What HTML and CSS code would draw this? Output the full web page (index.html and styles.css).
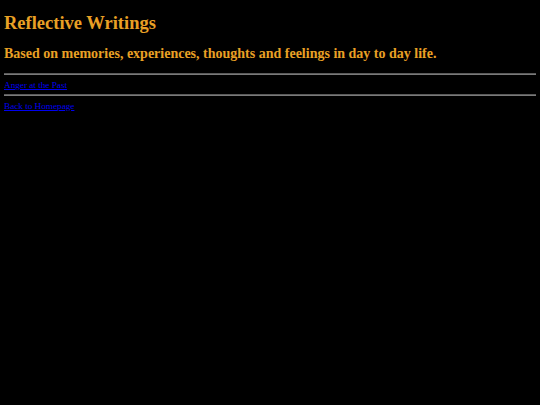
FILE: index.html
```html
<!DOCTYPE html>
<html>
<head>
<meta charset="utf-8">
<title>Reflective Writings</title>
<link rel="stylesheet" href="styles.css">
</head>
<body class="page">
<h1 class="title">Reflective Writings</h1>
<h2 class="subtitle">Based on memories, experiences, thoughts and feelings in day to day life.</h2>
<hr class="rule">
<a class="link" href="#">Anger at the Past</a>
<hr class="rule">
<a class="link" href="#">Back to Homepage</a>
</body>
</html>
```
FILE: styles.css
```css
html { background: #000; }
.page {
  margin: 4px;
  background: #000;
  color: #e9a025;
  font-family: "Liberation Serif", "Times New Roman", serif;
  font-size: 9px;
}
.title {
  font-size: 18.5px;
  font-weight: bold;
  line-height: 21px;
  margin: 9px 0 0;
}
.subtitle {
  font-size: 14px;
  font-weight: bold;
  line-height: 16px;
  margin: 12px 0 0;
}
.rule {
  border: none;
  border-top: 1px solid #5a5a5a;
  border-bottom: 1px solid #7a7a7a;
  height: 0;
  margin: 11px 0 5px;
}
.rule + .link + .rule { margin-top: 4px; }
.link {
  color: #0000ee;
  font-size: 9.2px;
  line-height: 10px;
  display: inline-block;
}
```
